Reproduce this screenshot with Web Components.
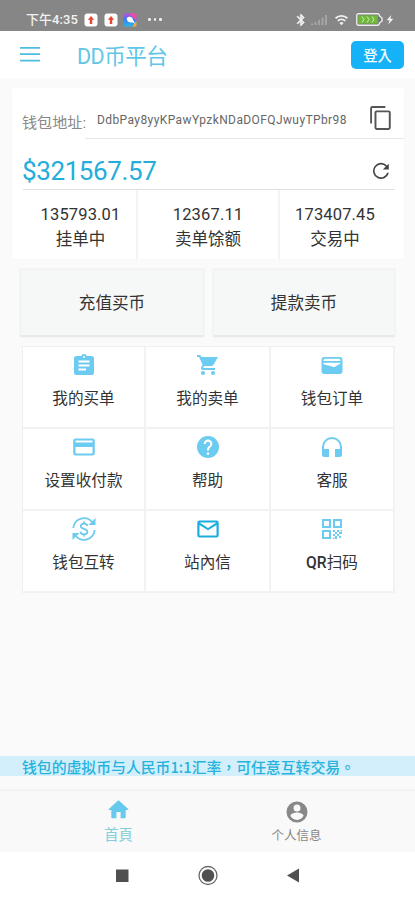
<!DOCTYPE html>
<html lang="zh-CN">
<head>
<meta charset="utf-8">
<meta name="viewport" content="width=device-width">
<title>DD币平台</title>
<style>
html,body{margin:0;height:100%;background:#fafafa}
body{overflow:hidden;font-family:Roboto,"Noto Sans CJK SC",sans-serif;color:#333}
</style>
</head>
<body>
<wallet-app></wallet-app>
<script>
const M = {
  clipboard:'<path d="M19.500 3h-4.700a3 3 0 0 0-5.600 0H4.500a2.500 2.500 0 0 0-2.500 2.500v14A2.500 2.500 0 0 0 4.500 22h15a2.500 2.500 0 0 0 2.500-2.500v-14A2.500 2.500 0 0 0 19.500 3zM12 3a1 1 0 1 1 0 2 1 1 0 0 1 0-2zm2 14.500H6.500v-2H14zm3.500-4h-11v-2h11zm0-4h-11v-2h11z"/>',
  cart:'<path d="M7 18a2 2 0 1 0 0 4 2 2 0 0 0 0-4zM1 2v2h2l3.600 7.590-1.350 2.450C4.520 15.370 5.480 17 7 17h12v-2H7.420a.25.25 0 0 1-.25-.25l.93-1.750h7.450c.75 0 1.410-.41 1.750-1.030L22 4H5.210l-.94-2zm16 16a2 2 0 1 0 0 4 2 2 0 0 0 0-4z"/>',
  wallet:'<path fill-rule="evenodd" d="M4.500 4h15A3 3 0 0 1 22.500 7v11a3 3 0 0 1-3 3h-15a3 3 0 0 1-3-3V7a3 3 0 0 1 3-3zM5 5.800A1.500 1.500 0 0 0 3.500 7.300v.7h17v-.7A1.500 1.500 0 0 0 19 5.800zM3.500 9.800v1.400l10.300 2.700a2 2 0 0 0 1.700-.3l5-3.200v-.6z"/>',
  card:'<path d="M20.500 3.500h-17A2.300 2.300 0 0 0 1.200 5.800v12.400a2.300 2.300 0 0 0 2.300 2.300h17a2.300 2.300 0 0 0 2.300-2.300V5.800a2.300 2.300 0 0 0-2.300-2.300zm0 15h-17V12h17zm0-11h-17v-2h17z"/>',
  help:'<path d="M12 1a11 11 0 1 0 0 22 11 11 0 0 0 0-22zm1.100 18.700h-2.200v-2.200h2.200zm2.300-8.500-1 1c-.8.8-1.300 1.500-1.300 3.200h-2.200v-.5c0-1.200.5-2.300 1.300-3.100l1.400-1.400c.4-.4.6-.9.6-1.500a2.200 2.200 0 0 0-4.400 0H7.600a4.400 4.400 0 0 1 8.800 0c0 .9-.4 1.700-1 2.300z"/>',
  headset:'<path d="M12 2a10 10 0 0 0-10 10v7.500A2.500 2.500 0 0 0 4.500 22H9v-8H4v-2a8 8 0 0 1 16 0v2h-5v8h4.500a2.500 2.500 0 0 0 2.500-2.500V12A10 10 0 0 0 12 2z"/>',
  transfer:'<g fill="none" stroke="currentColor" stroke-width="1.800"><path d="M1.300 11A10.700 10.700 0 0 1 20.500 5.500M22.700 13A10.700 10.700 0 0 1 3.500 18.500"/><path d="M15.300 9c-.2-1.700-1.600-2.400-3.300-2.400S8.800 7.500 8.800 9.200c0 3.500 6.600 2 6.600 5.500 0 1.700-1.500 2.600-3.400 2.600s-3.400-1-3.500-2.700M12 4.600v2.200M12 17.200v2.200"/></g><path d="M16.500 8h7V1zM7.500 16H.5v7z"/>',
  mail:'<path d="M20.500 3.500h-17A2.200 2.200 0 0 0 1.300 5.700v12.600a2.200 2.200 0 0 0 2.200 2.200h17a2.200 2.200 0 0 0 2.200-2.200V5.700a2.200 2.200 0 0 0-2.200-2.200zm0 15h-17V8l8.500 5.300L20.500 8zM12 11 3.500 5.500h17z"/>',
  qr:'<path fill-rule="evenodd" d="M2 2h9v9H2zm2 2v5h5V4zM13 2h9v9h-9zm2 2v5h5V4zM2 13h9v9H2zm2 2v5h5v-5z"/><path d="M13 13h2v2h-2zM17 13h2v2h-2zM15 15h2v2h-2zM19 15h3v2h-3zM13 17h2v2h-2zM17 17h2v2h-2zM15 19h2v3h-2zM19 19h2v2h-2zM20.500 13h1.500v1.500h-1.500zM13 20.500h1.500v1.500H13z"/>',
  menu:'<path d="M2 4h20v1.800H2zm0 6.300h20v1.800H2zM2 16.800h20v1.800H2z"/>',
  copy:'<path d="M16 1H4a2 2 0 0 0-2 2v14h1.700V2.700H16zm3 4H8a2 2 0 0 0-2 2v14a2 2 0 0 0 2 2h11a2 2 0 0 0 2-2V7a2 2 0 0 0-2-2zm.2 16.200H7.800V6.800h11.400z"/>',
  refresh:'<path d="M18.500 5.900A8.800 8.800 0 1 0 20.600 14h-1.900a7 7 0 1 1-1.500-6.800L14 10.300h6.500V4z"/>',
  home:'<path d="M9.800 21v-6.500h4.400V21h4.300a1 1 0 0 0 1-1v-7.500h2.300a.5.5 0 0 0 .3-.9L12.800 2.900a1.200 1.200 0 0 0-1.600 0L1.900 11.600a.5.5 0 0 0 .3.9h2.300V20a1 1 0 0 0 1 1z"/>',
  person:'<path d="M12 1.500a10.500 10.500 0 1 0 0 21 10.500 10.500 0 0 0 0-21zm0 3a3.500 3.500 0 1 1 0 7 3.500 3.500 0 0 1 0-7zm0 15.500A7.800 7.800 0 0 1 5.400 15.800c.5-2.200 4.400-3.300 6.600-3.300s6.100 1.100 6.600 3.300A7.800 7.800 0 0 1 12 20z"/>',
  bluetooth:'<path d="M17.700 7.700 12 2h-1v7.600L6.400 5 5 6.400l5.600 5.600L5 17.600 6.400 19l4.600-4.600V22h1l5.700-5.700-4.300-4.300zM13 5.800l1.900 1.900L13 9.600zm1.900 10.500L13 18.200v-3.800z" stroke="currentColor"/>',
  wifi:'<path d="M12 21 8.500 17a5 5 0 0 1 7 0z"/><path d="M5.500 13.500a9.500 9.500 0 0 1 13 0M1.800 9a15 15 0 0 1 20.400 0" fill="none" stroke="currentColor" stroke-width="3"/>',
  bolt:'<path d="M15 1 4 14h7l-3 10 12-14h-7z"/>'
};
function define(name, html, after){
  customElements.define(name, class extends HTMLElement{
    constructor(){
      super();
      const t=document.createElement('template');
      t.innerHTML=html;
      this.attachShadow({mode:'open'}).append(t.content.cloneNode(true));
    }
    connectedCallback(){ if(after) after(this,this.shadowRoot); }
  });
}

define('ui-icon','<style>:host{display:block;flex:none;width:24px;height:24px}svg{display:block;width:100%;height:100%;fill:currentColor}</style><svg viewBox="0 0 24 24"></svg>',
  (h,r)=>{if(h.hasAttribute('name'))r.querySelector('svg').innerHTML=M[h.getAttribute('name')]});

define('status-bar',`<style>
:host{display:flex;align-items:center;height:31px;background:#868686;color:#f2f2f2;padding:8px 20px 0 26px;box-sizing:border-box}
.t{font-size:13px;font-weight:500;line-height:22px;width:52px;white-space:nowrap;letter-spacing:.05px}
.a{display:block;margin-left:6px}.dots{display:flex;gap:3px;margin-left:11px}.dots i{width:2.500px;height:2.500px;border-radius:50%;background:#eee}
.r{margin-left:auto;display:flex;align-items:center}
</style><span class="t">下午4:35</span>
<svg class="a" width="14" height="14" viewBox="0 0 14 14"><rect x=".5" y=".5" width="13" height="13" rx="3" fill="#fff"/><path d="M7 3 3.800 6.800h2V11h2.400V6.800h2z" fill="#e8472f"/></svg>
<svg class="a" width="14" height="14" viewBox="0 0 14 14"><rect x=".5" y=".5" width="13" height="13" rx="3" fill="#fff"/><path d="M7 3 3.800 6.800h2V11h2.400V6.800h2z" fill="#e8472f"/></svg>
<svg class="a" width="14" height="14" viewBox="0 0 14 14" style="margin-left:5px"><defs><linearGradient id="g" x1="0" y1="0" x2="0" y2="1"><stop stop-color="#c04be0"/><stop offset=".45" stop-color="#3d7df0"/><stop offset="1" stop-color="#28b8e8"/></linearGradient></defs><rect x=".5" y=".5" width="13" height="13" rx="1.500" fill="url(#g)"/><path d="M6 .5h6a1.500 1.500 0 0 1 1.500 1.500v6z" fill="#ef4e9c"/><path d="M13.500 8v4a1.500 1.500 0 0 1-1.500 1.500H9z" fill="#ffa33a"/><path d="M4 5c1.800-2.200 5.600-1 5.800 1.500L12 10.500l-3-1.300C6 10.200 3 7.500 4 5z" fill="#fff"/></svg>
<span class="dots"><i></i><i></i><i></i></span>
<span class="r"><ui-icon name="bluetooth" style="width:14px;height:14px"></ui-icon>
<svg width="18" height="12" viewBox="0 0 18 12" style="margin:0 5px 0 3px" fill="#a5a5a5"><path d="M0 11V9.500h2V11zM3.500 11V8h2v3zM7 11V6h2v5zM10.500 11V3.500h2V11zM14 11V1h2v10z"/></svg>
<ui-icon name="wifi" style="width:15px;height:14px"></ui-icon>
<svg width="27" height="13" viewBox="0 0 27 13" style="margin:0 2px 0 7px"><path d="M2.500.8h19A2 2 0 0 1 23.500 3l2.500 2v3l-2.500 2a2 2 0 0 1-2 2.200h-19A1.700 1.700 0 0 1 .8 10.500v-8A1.700 1.700 0 0 1 2.500.8z" fill="#777" stroke="#eee" stroke-width="1.400"/><path d="M2.300 2.300h19.600v8.400H2.300z" fill="#70b83c"/><path d="m6 3.500 2 3-2 3m5-6 2 3-2 3m5-6 2 3-2 3" fill="none" stroke="#c9efaa"/></svg>
<ui-icon name="bolt" style="width:10px;height:11px"></ui-icon></span>`);

define('app-header',`<style>
:host{display:flex;align-items:center;height:47px;background:#fff;padding:0 11px 0 18px;box-sizing:border-box;color:#4fbce0}
h1{margin:4px 0 0 35px;font-size:21.500px;font-weight:400;line-height:30px;letter-spacing:-.5px;color:#62c6e6}
button{margin:1px 0 0 auto;width:53px;height:28px;border:0;border-radius:5px;background:#15b2f7;color:#f4fcff;font:500 14.300px/28px Roboto,"Noto Sans CJK TC",sans-serif;padding:1px 0 0}
</style><ui-icon name="menu"></ui-icon><h1>DD币平台</h1><button lang="zh-TW">登入</button>`);

define('balance-stat',`<style>
:host{display:block;text-align:center;line-height:25px;font-size:16.500px;color:#333}
b{display:block;font-weight:400;font-size:16.500px;letter-spacing:.15px}
span{display:block}
</style><b><slot name="value"></slot></b><span><slot></slot></span>`);

define('wallet-card',`<style>
:host{display:block;margin:10px 11px 0 12px;height:171px;background:#fff;box-sizing:border-box;box-shadow:0 0 2px #f4f4f4}
.addr{display:flex;height:50px;align-items:flex-end;color:#888}
.l{width:63px;margin-left:10px;font-size:15.100px;line-height:28px;white-space:nowrap;padding-bottom:1px}
.v{flex:1;height:51px;margin-bottom:-1px;border-bottom:1px solid #e6e6e6;box-sizing:border-box;display:flex;align-items:center;padding:10px 10px 0 12px;color:#666;justify-content:space-between}
.v span{font-size:12px;letter-spacing:.4px;white-space:nowrap;margin-top:3px}
.v ui-icon{color:#555}
.amt{margin:0 9px 0 11px;height:52px;box-sizing:border-box;border-bottom:1px solid #e0e0e0;display:flex;align-items:center;justify-content:space-between;padding-top:14px;color:#24addb;font-size:26px}
.amt span{margin-left:-1px;letter-spacing:-.4px}
.amt ui-icon{width:22px;height:22px;color:#444;margin-right:3px}
.s{display:grid;grid-template-columns:126px 142px 1fr;height:69px}
.s balance-stat{padding-top:12px}
.s>:not(:last-child){border-right:2px solid #f3f3f3}
.s>:first-child{padding-left:13px}
.s>:last-child{padding-right:14px}
i{font-style:normal}
</style>
<div class="addr"><span class="l">钱包地址:</span><div class="v"><span>DdbPay8yyKPawYpzkNDaDOFQJwuyTPbr98</span><ui-icon name="copy" style="width:26px;height:26px"></ui-icon></div></div>
<div class="amt"><span>$321567.57</span><ui-icon name="refresh"></ui-icon></div>
<div class="s"><balance-stat><i slot="value">135793.01</i>挂单中</balance-stat><balance-stat><i slot="value">12367.11</i>卖单馀额</balance-stat><balance-stat><i slot="value">173407.45</i>交易中</balance-stat></div>`);

define('trade-actions',`<style>
:host{display:grid;grid-template-columns:184px 182px;gap:9px;margin:10px 0 0 20px;height:68px}
button{font:400 16.600px/24px Roboto,"Noto Sans CJK SC",sans-serif;color:#333;background:#f6f8f8;border:1px solid #f0f1f1;border-bottom:2px solid #e8e9e9;padding:3px 0 0;box-shadow:0 0 2px #eee}
button:first-child{padding-right:2px}
</style><button>充值买币</button><button>提款卖币</button>`);

define('menu-tile',`<style>
:host{display:flex;flex-direction:column;align-items:center;background:#fff;font-size:15.600px;line-height:24px;color:#333;padding-top:6px;border-right:2px solid #f2f2f2;border-bottom:2px solid #f2f2f2;box-sizing:border-box;white-space:nowrap}
ui-icon{color:var(--tint,#6ccbf0);margin-bottom:10px}
</style><ui-icon></ui-icon><span><slot></slot></span>`,
(h,r)=>{r.querySelector('ui-icon').shadowRoot.querySelector('svg').innerHTML=M[h.getAttribute('icon')]});

define('menu-grid',`<style>
:host{display:grid;grid-template-columns:123px 125px 124px;grid-auto-rows:82px;margin:9px 0 0 22px;width:373px;border-left:1px solid #efefef;border-top:1px solid #efefef;box-sizing:border-box}
b{font-weight:500}
</style>
<menu-tile icon="clipboard">我的买单</menu-tile><menu-tile icon="cart">我的卖单</menu-tile><menu-tile icon="wallet">钱包订单</menu-tile>
<menu-tile icon="card">设置收付款</menu-tile><menu-tile icon="help">帮助</menu-tile><menu-tile icon="headset">客服</menu-tile>
<menu-tile icon="transfer">钱包互转</menu-tile><menu-tile icon="mail" style="--tint:#1caddc">站內信</menu-tile><menu-tile icon="qr"><b>QR</b>扫码</menu-tile>`);

define('notice-bar',`<style>
:host{display:block;margin-top:auto;height:20px;background:#d3effc;color:#27b3dc;font:500 14.900px/22px "Noto Sans CJK TC",sans-serif;letter-spacing:-.05px;padding-left:22px;white-space:nowrap}
</style><slot></slot>`);

define('tab-item',`<style>
:host{display:flex;flex-direction:column;align-items:center;width:178px;padding-top:7px;font-size:12.500px;line-height:18px;color:#888}
</style><slot></slot>`);

define('bottom-tabs',`<style>
:host{display:flex;justify-content:center;height:62px;margin-top:14px;background:#f9f9f9;border-top:1px solid #f1f1f1;box-shadow:0 -1px 2px #f4f4f4;box-sizing:border-box}
.on{color:#82cedb;font:400 14.300px/20px "Noto Sans CJK TC",sans-serif}
.on ui-icon{color:#68c9ef;width:23px;height:23px;margin-bottom:3px}
</style><tab-item class="on"><ui-icon name="home"></ui-icon><span lang="zh-TW">首頁</span></tab-item><tab-item><ui-icon name="person" style="margin-top:2px"></ui-icon><span style="margin-top:3px">个人信息</span></tab-item>`);

define('system-nav',`<style>
:host{display:flex;justify-content:center;align-items:center;height:48px;background:#fff}
svg{display:block}
</style><svg width="190" height="22" viewBox="0 0 190 22" fill="#505050"><path d="M3 4.500h12.500v12.500H3z"/><circle cx="95" cy="10.500" r="9" fill="none" stroke="#666" stroke-width="1.300"/><circle cx="95" cy="10.500" r="6.300"/><path d="M174 10.500l12-7v14z"/></svg>`);

define('wallet-app',`<style>
:host{display:flex;flex-direction:column;height:900px;width:415px;background:#fafafa}
</style><status-bar></status-bar><app-header></app-header><wallet-card></wallet-card><trade-actions></trade-actions><menu-grid></menu-grid><notice-bar lang="zh-TW">钱包的虚拟币与人民币1:1汇率，可任意互转交易。</notice-bar><bottom-tabs></bottom-tabs><system-nav></system-nav>`);
</script>
</body>
</html>
